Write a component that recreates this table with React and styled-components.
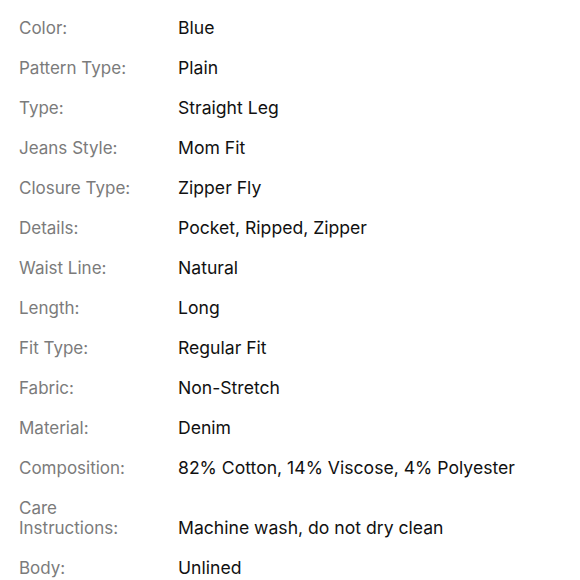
import styled, { createGlobalStyle } from "styled-components";

const GlobalStyle = createGlobalStyle`
    body {
        margin: 0;
        background: #fff;
        font-family: Inter, "Noto Sans", sans-serif;
    }
`;

const SpecList = styled.dl`
    margin: 0;
    padding: 18px 19px;
    display: flex;
    flex-direction: column;
    gap: 20px;
`;

const SpecRow = styled.div`
    display: flex;
    align-items: last baseline;
    gap: 29px;
`;

const Label = styled.dt`
    width: 130px;
    flex-shrink: 0;
    font-size: 17px;
    line-height: 20px;
    color: #7b7b7b;
`;

const Value = styled.dd`
    margin: 0;
    font-size: 17.6px;
    line-height: 20px;
    color: #111;
`;

const specs = [
  ["Color:", "Blue"],
  ["Pattern Type:", "Plain"],
  ["Type:", "Straight Leg"],
  ["Jeans Style:", "Mom Fit"],
  ["Closure Type:", "Zipper Fly"],
  ["Details:", "Pocket, Ripped, Zipper"],
  ["Waist Line:", "Natural"],
  ["Length:", "Long"],
  ["Fit Type:", "Regular Fit"],
  ["Fabric:", "Non-Stretch"],
  ["Material:", "Denim"],
  ["Composition:", "82% Cotton, 14% Viscose, 4% Polyester"],
  ["Care Instructions:", "Machine wash, do not dry clean"],
  ["Body:", "Unlined"],
];

const App = () => {
  return (
    <>
      <GlobalStyle />
      <SpecList>
        {specs.map(([label, value]) => (
          <SpecRow key={label}>
            <Label>{label}</Label>
            <Value>{value}</Value>
          </SpecRow>
        ))}
      </SpecList>
    </>
  );
};

export default App;
